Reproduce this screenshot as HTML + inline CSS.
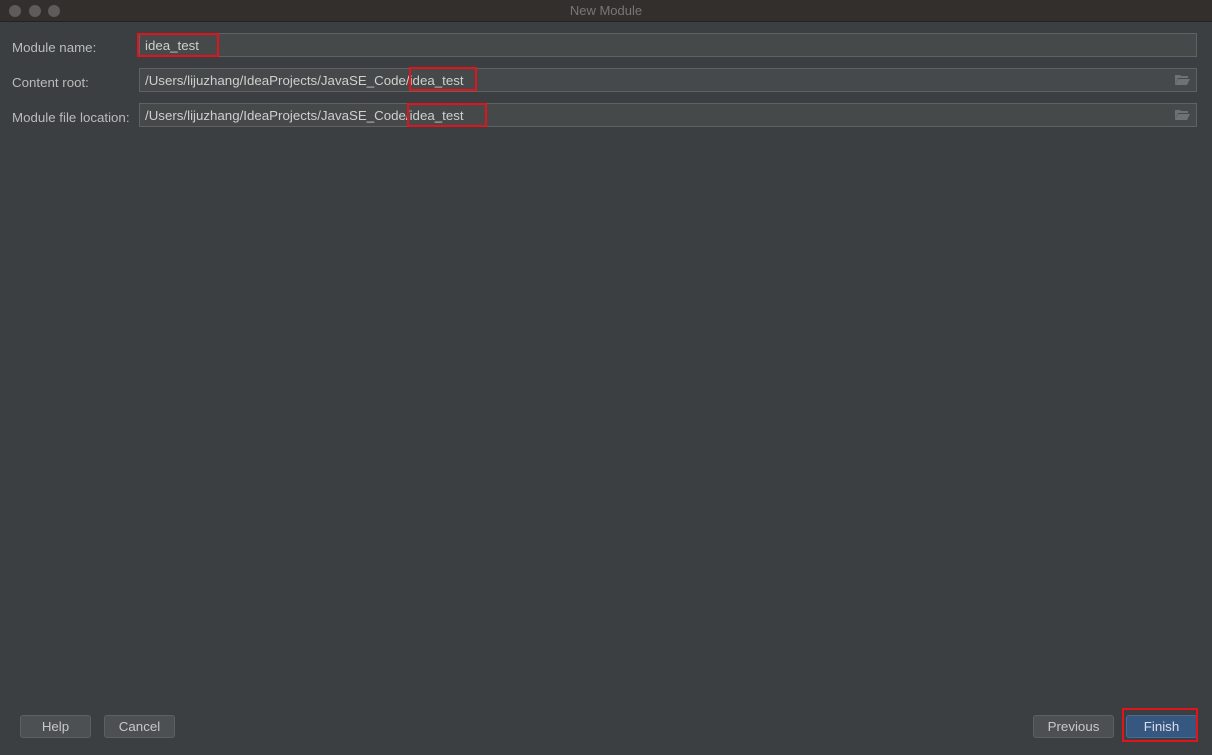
<!DOCTYPE html><html><head><style>
body{margin:0;width:1212px;height:755px;background:#3c3f41;font-family:"Liberation Sans",sans-serif;font-size:13.3px;color:#bbbbbb;position:relative;overflow:hidden}
.a{position:absolute}
.tb{left:0;top:0;width:1212px;height:21px;background:#332f2d;border-bottom:1px solid #222;color:#777;text-align:center;line-height:22px;font-size:13px}
.dot{top:5px;width:12px;height:12px;border-radius:50%;background:#5e5c5b}
.f{left:139px;background:#45494a;border:1px solid #5f6163;line-height:23px;padding-left:5px;box-sizing:border-box;width:1058px;height:24px;color:#cfcfcf}
.l{left:12px}
.r{border:2px solid #e0141c}
.btn{top:715px;height:23px;background:#4c5052;border:1px solid #5e6060;border-radius:3px;text-align:center;line-height:22px;color:#c8c8c8;box-sizing:border-box}
.ic{right:6px;top:5px}
</style></head><body>
<div class="a tb">New Module</div>
<div class="a dot" style="left:9px"></div><div class="a dot" style="left:29px"></div><div class="a dot" style="left:48px"></div>
<div class="a l" style="top:40px">Module name:</div>
<div class="a l" style="top:75px">Content root:</div>
<div class="a l" style="top:110px">Module file location:</div>
<div class="a f" style="top:33px">idea_test</div>
<div class="a f" style="top:68px">/Users/lijuzhang/IdeaProjects/JavaSE_Code/idea_test<svg class="a ic" width="15" height="12" viewBox="0 0 15 12"><path d="M0 1h5l1 1h7v2H3L0 11z" fill="#6e7274"/><path d="M3 5h12l-3 6H0z" fill="#6e7274"/></svg></div>
<div class="a f" style="top:103px">/Users/lijuzhang/IdeaProjects/JavaSE_Code/idea_test<svg class="a ic" width="15" height="12" viewBox="0 0 15 12"><path d="M0 1h5l1 1h7v2H3L0 11z" fill="#6e7274"/><path d="M3 5h12l-3 6H0z" fill="#6e7274"/></svg></div>
<div class="a r" style="left:137px;top:33px;width:78px;height:20px"></div>
<div class="a r" style="left:409px;top:67px;width:64px;height:20px"></div>
<div class="a r" style="left:407px;top:103px;width:76px;height:20px"></div>
<div class="a btn" style="left:20px;width:71px">Help</div>
<div class="a btn" style="left:104px;width:71px">Cancel</div>
<div class="a btn" style="left:1033px;width:81px">Previous</div>
<div class="a btn" style="left:1126px;width:71px;background:#365880;border-color:#4a6b95;color:#dde">Finish</div>
<div class="a r" style="left:1122px;top:708px;width:72px;height:30px"></div>
</body></html>
